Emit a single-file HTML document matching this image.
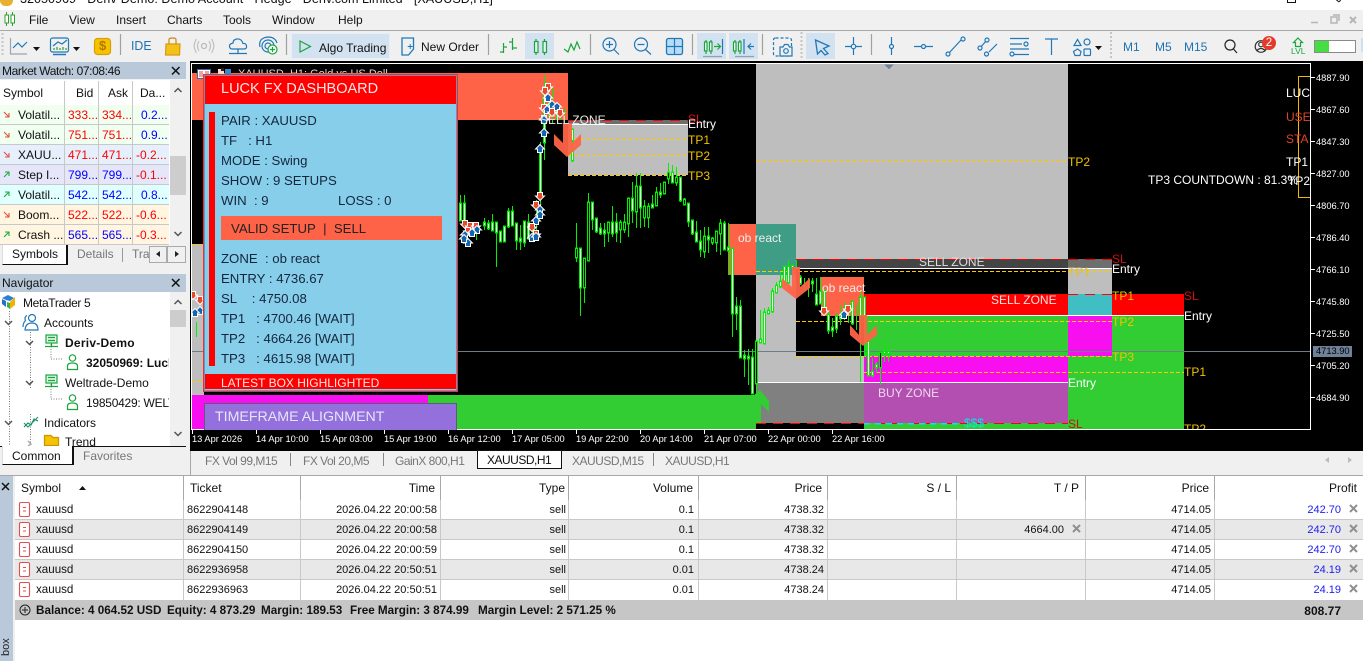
<!DOCTYPE html>
<html><head><meta charset="utf-8"><style>
html,body{margin:0;padding:0;background:#fff}
#p{position:relative;width:1363px;height:661px;overflow:hidden;background:#f0f0f0;font-family:"Liberation Sans",sans-serif;font-size:12px;color:#111}
.b{position:absolute}
.t{position:absolute;white-space:nowrap;line-height:14px;height:14px}
.r{text-align:right}
.lb{color:#f2c200}
.w{color:#fff}
.ax{position:absolute;color:#fff;font-size:9.3px;line-height:11px;white-space:nowrap}
.d{color:#14263c;font-size:13.2px}
.g{color:#777}
.tb{color:#1f72b0}
.n{font-size:11px}
.x{font-size:11.6px}
.k{letter-spacing:-.5px}
.bl{font-weight:bold;font-size:11.7px}
svg{position:absolute;overflow:visible}
</style></head><body><div id="p">

<!-- title bar -->
<div class="b" style="left:0;top:0;width:1363px;height:10px;background:#fff;overflow:hidden">
<div class="t" style="left:20px;top:-8px;font-size:12.6px">32050969 - Deriv-Demo: Demo Account - Hedge - Deriv.com Limited - [XAUUSD,H1]</div>
<div class="b" style="left:0;top:-5px;width:13px;height:11px;border-radius:6px;background:#e8b030"></div>
<div class="b" style="left:1287px;top:-6px;width:7px;height:7px;border:1px solid #111"></div>
<svg style="left:1332px;top:0" width="12" height="4"><path d="M1-3L7 2M11-3L7 2" stroke="#111"/></svg>
</div>

<!-- menu -->
<div class="b" style="left:0;top:30px;width:1363px;height:1px;background:#a8a8a8"></div>
<svg style="left:4px;top:12px" width="14" height="16"><path d="M2.5 0V14M8.5 0V14" stroke="#2ca02c" stroke-width="1"/><rect x="1" y="3" width="3.5" height="8" fill="#fff" stroke="#2ca02c"/><rect x="7" y="3" width="3.5" height="8" fill="#fff" stroke="#2ca02c"/></svg>
<div class="t" style="left:29px;top:13px">File</div>
<div class="t" style="left:69px;top:13px">View</div>
<div class="t" style="left:116px;top:13px">Insert</div>
<div class="t" style="left:167px;top:13px">Charts</div>
<div class="t" style="left:223px;top:13px">Tools</div>
<div class="t" style="left:272px;top:13px">Window</div>
<div class="t" style="left:338px;top:13px">Help</div>
<svg style="left:1300px;top:14px" width="60" height="12" fill="none" stroke="#b5b5b5" stroke-width="1.5"><path d="M11 8.5h7"/><rect x="31" y="3" width="6" height="6"/><path d="M33 1h6v6"/><path d="M50 3l6 6M56 3l-6 6" stroke-width="2"/></svg>

<!-- toolbar -->
<div class="b" style="left:291px;top:33px;width:99px;height:26px;background:#d3e2f0;border:1px solid #e8eef5;box-sizing:border-box"></div>
<div class="b" style="left:525px;top:33px;width:29px;height:26px;background:#d3e2f0"></div>
<div class="b" style="left:697px;top:33px;width:29px;height:26px;background:#d3e2f0"></div>
<div class="b" style="left:729px;top:33px;width:29px;height:26px;background:#d3e2f0"></div>
<div class="b" style="left:806px;top:33px;width:29px;height:26px;background:#d3e2f0"></div>
<svg style="left:0;top:31px" width="1363" height="29" fill="none" stroke="#1f78b8" stroke-width="1.2">
<g stroke="#a0a0a0"><path d="M120.5 3V24M286.5 3V24M488.5 3V24M590.5 3V24M692.5 3V24M762.5 3V24M871.5 3V24"/></g>
<path d="M2.5 2V25M801.5 1V27M1111 1V27" stroke="#c4c4c4" stroke-width="2" stroke-dasharray="2 2"/>
<!-- line chart -->
<path d="M10.5 7V23H27" stroke="#9aa5b0"/><path d="M13 17L18 12L22 16L27 11"/>
<path d="M33 16h7l-3.5 4z" fill="#111" stroke="none"/>
<!-- chart2 -->
<rect x="50.5" y="7" width="18" height="14" rx="2"/><path d="M53 23.5h13" stroke-width="1.5"/><path d="M53 15L58 11L62 13L67 9"/><path d="M54 19v-2M57 19v-3M60 19v-2M63 19v-3M66 19v-2" stroke="#2ca02c"/>
<path d="M73 16h7l-3.5 4z" fill="#111" stroke="none"/>
<!-- dollar -->
<rect x="94.5" y="7.5" width="16" height="16" rx="3" fill="#f7c200" stroke="#d8a000"/>
<!-- bag -->
<path d="M166 13H180L179.5 24H165.5Z" fill="#f2c21a" stroke="#d89a10"/><path d="M169 13V8.5Q169 7 172.500 7T176 8.5V13" stroke="#c88a10"/>
<!-- signal -->
<circle cx="204" cy="15" r="2.5" stroke="#b8b8b8"/><path d="M199 10Q196 15 199 20M209 10Q212 15 209 20M196.5 8Q192 15 196.5 22M211.5 8Q216 15 211.5 22" stroke="#c0c0c0"/>
<!-- cloud -->
<path d="M232 18H244Q247 18 246.5 15Q246 12 243 12.5Q241.5 7.5 237 8Q233 8.5 233 12Q229 13 229.5 15.5Q230 18 232 18Z"/><path d="M238 18V22M229 22.5H247"/>
<!-- radar -->
<circle cx="268" cy="15" r="3"/><circle cx="268" cy="15" r="6"/><path d="M260 16Q258 7 268 6Q275 6 277 12"/>
<circle cx="272.5" cy="18.5" r="4.5" fill="#fff" stroke="#1aa53c"/><path d="M270 18.5h5M272.5 16v5" stroke="#1aa53c"/>
<!-- algo -->
<path d="M300 10L310.5 15.5L300 21Z" stroke="#1aa53c"/>
<!-- new order -->
<path d="M402 7H413.5V18L408.5 24H402Z" stroke-width="1.3"/><path d="M407.7 15.5h5M410.2 13v5" stroke-width="1"/>
<!-- bars -->
<path stroke="#1aa53c" d="M503.5 12V22M500 21H503.5M503.5 16H507M512.5 7V19M509 11H512.5M512.5 17H517"/>
<!-- candles -->
<g stroke="#1aa53c"><path d="M536 8V24M544.5 8V24"/><rect x="534.5" y="10.5" width="3.5" height="11" fill="#e9f2f9"/><rect x="543" y="10.5" width="3.5" height="11" fill="#e9f2f9"/></g>
<!-- line -->
<path d="M564 18L568 21L571 13L574 19L577 11L580 18" stroke="#1aa53c"/>
<!-- zoom -->
<circle cx="609.5" cy="13.5" r="6.5"/><path d="M614 18.5L619 23.5M606 13.5H613M609.5 10V17"/>
<circle cx="641" cy="13.5" r="6.5"/><path d="M645.5 18.5L651 23.5M637.5 13.5H644.5"/>
<rect x="666.5" y="7.5" width="16" height="16" rx="2" fill="#b9dcf6" stroke-width="1.3"/><path d="M666.5 15.5H682.5M674.5 7.5V23.5"/>
<!-- shift -->
<g stroke="#1aa53c"><path d="M706 9V23M711 9V23"/><rect x="704.5" y="11" width="2.5" height="9" fill="#fff"/><rect x="709.5" y="11" width="2.5" height="9" fill="#fff"/><path d="M714 15.5H720M717.5 12.5L720.5 15.5L717.5 18.5"/></g><path d="M722.5 8V23"/><path d="M703 25.5H722" stroke="#8aa0b4"/>
<g stroke="#1aa53c"><path d="M735 9V23M740 9V23"/><rect x="733.5" y="11" width="2.5" height="9" fill="#fff"/><rect x="738.5" y="11" width="2.5" height="9" fill="#fff"/></g><path d="M744 8V23M748 15.5H754M751 12.5L748 15.5L751 18.5"/><path d="M735 25.5H754" stroke="#8aa0b4"/>
<!-- camera -->
<rect x="773.5" y="7" width="18" height="18" rx="2" stroke-dasharray="3 2"/><path d="M780 16H783L784.5 13.5H788L789.5 16H792V25H780Z" fill="#f0f0f0"/><circle cx="786" cy="20" r="2.3"/>
<!-- cursor -->
<path d="M815.5 9L829 15L823.5 17.5L828 22.5L825 24L821 19.5L817.5 23Z" stroke-width="1.3"/>
<!-- cross -->
<path d="M845 15.5H862M853.5 6V24"/><circle cx="853.5" cy="15.5" r="2.2" fill="#f0f0f0"/>
<!-- vertical -->
<path d="M891.5 6V24"/><circle cx="891.5" cy="15.5" r="2" fill="#f0f0f0"/>
<path d="M914 15.5H933"/><circle cx="923.5" cy="15.5" r="2" fill="#f0f0f0"/>
<path d="M949 22L962 8"/><circle cx="948" cy="23" r="2" fill="#f0f0f0"/><circle cx="963" cy="8" r="2" fill="#f0f0f0"/>
<path d="M980 17L986 10M989 21L997 13"/><circle cx="980" cy="17" r="2" fill="#f0f0f0"/><circle cx="987" cy="9" r="2" fill="#f0f0f0"/><circle cx="986.5" cy="23" r="2" fill="#f0f0f0"/>
<path d="M1010 7.5H1029M1010 13H1022M1010 18H1029M1014 23.5H1029"/><circle cx="1026" cy="13" r="2" fill="#f0f0f0"/><circle cx="1012" cy="23" r="2" fill="#f0f0f0"/>
<path d="M1045 8H1058M1051.5 8V24"/>
<path d="M1074 14.5L1077.5 8.5L1081 14.5Z"/><circle cx="1087" cy="11" r="3"/><path d="M1077.5 18L1081 20.5L1080 24.5H1075L1073.5 20.5Z"/><rect x="1084" y="18" width="6.5" height="6.5" rx="1"/>
<path d="M1095 15h7l-3.5 4z" fill="#111" stroke="none"/>
<!-- search -->
<circle cx="1230" cy="14" r="5" stroke="#222"/><path d="M1233.5 18L1237 22" stroke="#222"/>
<!-- user -->
<circle cx="1261" cy="15.5" r="5.8" stroke="#333"/><circle cx="1261" cy="13.5" r="2.3" stroke="#333"/><path d="M1256.5 20Q1261 15 1265.5 20" stroke="#333"/>
<!-- LVL arrow -->
<path d="M1298 7L1302.500 11.500H1300.500V15.500H1295.500V11.500H1293.500Z" stroke="#1aa53c"/>
</svg>
<div class="t" style="left:131px;top:39px;color:#1f72b0;font-size:13px;transform:scaleX(.95);transform-origin:left">IDE</div>
<div class="t" style="left:99px;top:39px;color:#b07a00;font-size:13px;font-weight:bold">$</div>
<div class="t" style="left:319px;top:41px">Algo Trading</div>
<div class="t" style="left:421px;top:40px">New Order</div>
<div class="t tb" style="left:1123px;top:40px">M1</div>
<div class="t tb" style="left:1155px;top:40px">M5</div>
<div class="t tb" style="left:1184px;top:40px">M15</div>
<div class="b" style="left:1262px;top:36px;width:14px;height:14px;border-radius:7px;background:#e33a2c;color:#fff;text-align:center;line-height:14px;font-size:11.5px">2</div>
<div class="t" style="left:1291px;top:47px;color:#1aa53c;font-size:8.5px;height:8px;line-height:8px">LVL</div>
<div class="b" style="left:1314px;top:40px;width:42px;height:13px;background:#fff;border:1px solid #8a8a8a;box-sizing:border-box"><div style="width:14px;height:11px;background:#44dd44"></div></div>
<div class="b" style="left:1361px;top:38px;width:2px;height:14px;background:#cfe0f0"></div>

<!-- CHART -->
<div class="b" style="left:190px;top:60px;width:1173px;height:1px;background:#f0f0f0"></div>
<div class="b" style="left:190px;top:61px;width:1173px;height:390px;background:#000;overflow:hidden"></div>
<svg style="left:0;top:0" width="1363" height="661" shape-rendering="crispEdges">
<defs>
<clipPath id="c"><rect x="192" y="64" width="1118" height="365"/></clipPath>
<path id="u" d="M0-4.5L4.5 0H2.5V3.5H-2.5V0H-4.5Z" fill="#1464b0" stroke="#fff" stroke-width="1"/>
<path id="e" d="M0 4.5L4.5 0H2.5V-3.5H-2.5V0H-4.5Z" fill="#e8492a" stroke="#fff" stroke-width="1"/>
<path id="bw" d="M460.5 204v16M464.5 204v16M484.5 223v2M488.5 224v4M492.5 223v7M496.5 223v9M500.5 232v9M504.5 227v14M508.5 212v14M512.5 212v13M516.5 224v16M520.5 239v2M524.5 222v20M528.5 223v15M540.5 150v43M544.5 93v49M572.5 130v10M572.5 150v10M580.5 249v38M592.5 203v16M596.5 219v12M600.5 229v4M604.5 231v2M612.5 223v10M616.5 223v9M632.5 199v11M640.5 187v20M652.5 205v2M660.5 193v1M672.5 173v9M680.5 178v22M688.5 204v17M692.5 221v12M696.5 233v8M700.5 242v7M708.5 237v2M724.5 224v25M728.5 248v2M732.5 249v64M736.5 307v6M740.5 307v50M744.5 356v2M748.5 357v1M752.5 358v35M760.5 340v2M764.5 313v30M768.5 311v2M772.5 292v19M776.5 286v6M780.5 282v4M784.5 267v15M788.5 267v15M792.5 266v1M800.5 278v5M812.5 282v1M816.5 295v9M820.5 292v11M824.5 291v19M828.5 315v15M832.5 328v2M836.5 317v11M840.5 317v1M852.5 302v21M860.5 298v17M864.5 298v17M868.5 342v33M872.5 372v3M876.5 365v2M884.5 352v1M888.5 352v1"/>
<path id="bh" d="M576.5 249v8M584.5 259v28M588.5 203v57M608.5 223v9M620.5 223v6M624.5 223v6M628.5 199v24M636.5 187v24M644.5 207v10M648.5 207v10M656.5 193v12M664.5 183v10M668.5 173v5M676.5 178v4M684.5 200v4M704.5 237v14M712.5 239v3M716.5 232v10M720.5 224v9M756.5 342v41M880.5 353v14"/>
</defs>
<g clip-path="url(#c)">
<rect x="192" y="73" width="376" height="47" fill="#ff6347"/>
<rect x="756" y="64" width="312" height="195" fill="#bebebe"/>
<rect x="568" y="120" width="120" height="4" fill="#6e6e6e"/>
<rect x="568" y="124" width="120" height="51" fill="#bebebe"/>
<rect x="192" y="244" width="12" height="151" fill="#bebebe"/>
<rect x="192" y="395" width="236" height="34" fill="#f80ff0"/>
<rect x="428" y="395" width="328" height="34" fill="#32cd32"/>
<rect x="728" y="224" width="28" height="51" fill="#ff6347"/>
<rect x="756" y="224" width="40" height="51" fill="#3f9d85"/>
<rect x="756" y="275" width="40" height="107" fill="#bebebe"/>
<rect x="796" y="356" width="68" height="26" fill="#bebebe"/>
<rect x="796" y="259" width="272" height="9" fill="#444"/>
<rect x="756" y="382" width="108" height="41" fill="#808080"/>
<rect x="864" y="294" width="204" height="21" fill="#f00"/>
<rect x="864" y="315" width="204" height="41" fill="#32cd32"/>
<rect x="864" y="356" width="204" height="26" fill="#f80ff0"/>
<rect x="864" y="382" width="204" height="41" fill="#b24fb0"/>
<rect x="864" y="423" width="204" height="6" fill="#32cd32"/>
<rect x="1068" y="259" width="44" height="9" fill="#6e6e6e"/>
<rect x="1068" y="268" width="44" height="26" fill="#bebebe"/>
<rect x="1068" y="294" width="44" height="21" fill="#3fbfc4"/>
<rect x="1068" y="315" width="44" height="41" fill="#f80ff0"/>
<rect x="1068" y="356" width="44" height="73" fill="#32cd32"/>
<rect x="1112" y="294" width="72" height="21" fill="#f00"/>
<rect x="1112" y="315" width="72" height="114" fill="#32cd32"/>
<rect x="821" y="277" width="43" height="39" fill="#ff6347"/>
<!-- lines -->
<g fill="none" stroke-width="1">
<path d="M192 351.5H1310" stroke="#6f7a8a"/>
<path d="M568 124.5H688M796 268.5H1112M864 315.5H1184M756 382.5H1068" stroke="#fff"/>
<g stroke="#f00" stroke-dasharray="10 7"><path d="M568 120.5H688M796 259.5H1112M756 423.5H1068M864 294.5H1112"/></g>
<g stroke="#ffc800" stroke-dasharray="4 2"><path d="M568 139.5H688M568 155.5H688M568 175.5H688M756 161.5H1068M756 271.5H1112M796 321.5H1112M796 356.5H1112M864 372.5H1184M192 244.5H204M192 381.5H204"/></g>
<path d="M864 423.5H962" stroke="#00e8e8" stroke-dasharray="6 5" stroke-width="1.5"/>
</g>
<!-- candles wicks -->
<path fill="none" stroke="#00f000" d="M196.5 322V337M460.5 195V220M464.5 195V220M472.5 223V237M476.5 223V240M484.5 218V230M488.5 220V230M492.5 214V230M496.5 223V267M500.5 232V242M504.5 226V242M508.5 208V228M512.5 206V226M516.5 223V250M520.5 225V250M524.5 222V247M528.5 214V240M532.5 225V240M536.5 200V235M540.5 142V210M544.5 75V160M548.5 83V117M552.5 87V123M556.5 103V120M560.5 110V120M564.5 108V125M572.5 130V162M576.5 223V262M580.5 248V316M584.5 258V303M588.5 193V260M592.5 202V230M596.5 218V233M600.5 223V235M604.5 223V247M608.5 222V242M612.5 206V237M616.5 213V242M620.5 220V243M624.5 214V233M628.5 198V237M632.5 182V223M636.5 173V228M640.5 173V228M644.5 200V227M648.5 203V228M652.5 195V208M656.5 187V206M660.5 183V198M664.5 182V193M668.5 163V184M672.5 165V182M676.5 167V186M680.5 177V202M684.5 198V205M688.5 203V227M692.5 220V235M696.5 221V242M700.5 230V257M704.5 227V258M708.5 227V253M712.5 237V245M716.5 232V252M720.5 219V255M724.5 221V250M728.5 223V275M732.5 248V337M736.5 297V330M740.5 300V357M744.5 350V377M748.5 349V385M752.5 349V393M756.5 341V392M760.5 310V343M764.5 308V344M768.5 307V314M772.5 288V313M776.5 282V293M780.5 272V288M784.5 267V282M788.5 260V285M792.5 265V277M796.5 260V270M800.5 275V285M804.5 278V290M808.5 278V297M812.5 278V292M816.5 278V304M820.5 277V304M824.5 290V313M828.5 312V334M832.5 318V337M836.5 313V333M840.5 305V325M844.5 302V320M848.5 308V323M852.5 302V325M856.5 305V330M860.5 290V382M864.5 297V357M868.5 342V376M872.5 358V377M876.5 362V373M880.5 352V385M884.5 341V362M888.5 350V362"/>
<!-- candle bodies -->
<use href="#bw" fill="none" stroke="#00f000" stroke-width="3" stroke-linecap="square"/>
<use href="#bh" fill="none" stroke="#00f000" stroke-width="3" stroke-linecap="square"/>
<use href="#bw" fill="none" stroke="#fff" stroke-width="1"/>
<use href="#bh" fill="none" stroke="#000" stroke-width="1"/>
<!-- big arrows -->
<g fill="#ff6347" fill-opacity=".95" shape-rendering="auto">
<polygon points="563,123 572,123 572,143 581,134 581,145 567,157 554,145 554,134 563,143"/>
<polygon points="792,267 800,267 800,287 810,278 810,288 796,299 782,288 782,278 792,287"/>
<polygon points="859,315 867,315 867,335 877,325 877,335 863,346 850,335 850,325 859,335"/>
<polygon points="760,390 769,401 769,412 761,404 761,423 754,423 754,395" fill="#32cd32" fill-opacity="1"/>
</g>
<!-- markers -->
<g shape-rendering="auto">
<use href="#e" x="548" y="87"/><use href="#e" x="545" y="91"/><use href="#u" x="548" y="98"/><use href="#e" x="544" y="108"/><use href="#u" x="547" y="110"/><use href="#u" x="552" y="105"/><use href="#u" x="557" y="107"/><use href="#e" x="552" y="112"/><use href="#e" x="560" y="113"/><use href="#e" x="544" y="119"/><use href="#u" x="544" y="120"/><use href="#u" x="544" y="133"/><use href="#u" x="540" y="149"/><use href="#e" x="540" y="196"/><use href="#e" x="536" y="205"/><use href="#u" x="540" y="210"/><use href="#u" x="540" y="215"/><use href="#u" x="536" y="221"/><use href="#e" x="532" y="227"/><use href="#e" x="536" y="234"/><use href="#u" x="532" y="238"/><use href="#u" x="536" y="237"/>
<use href="#e" x="465" y="224"/><use href="#e" x="470" y="226"/><use href="#e" x="476" y="226"/><use href="#e" x="468" y="231"/><use href="#u" x="477" y="230"/><use href="#u" x="472" y="233"/><use href="#u" x="465" y="235"/><use href="#u" x="468" y="243"/><use href="#u" x="464" y="239"/>
<use href="#e" x="193" y="295"/><use href="#e" x="200" y="300"/><use href="#u" x="200" y="311"/><use href="#u" x="195" y="313"/>
<use href="#e" x="824" y="311"/><use href="#e" x="848" y="309"/><use href="#u" x="844" y="315"/>
</g>
</g>
<!-- frame -->
<path d="M191.5 63.5H1310.5V429.5H191.5Z" fill="none" stroke="#fff"/>
<path d="M884 64.5H894L889 69Z" fill="#6f8099"/>
<!-- ticks -->
<path stroke="#fff" fill="none" d="M192.5 430V434M256.5 430V434M320.5 430V434M384.5 430V434M448.5 430V434M512.5 430V434M576.5 430V434M640.5 430V434M704.5 430V434M768.5 430V434M832.5 430V434M1311 77.5H1315M1311 109.5H1315M1311 141.5H1315M1311 173.5H1315M1311 205.5H1315M1311 237.5H1315M1311 269.5H1315M1311 301.5H1315M1311 333.5H1315M1311 365.5H1315M1311 397.5H1315"/>
<path fill="none" stroke="#f2b800" d="M1310 76.5H1298.5V197.5H1310"/>
<rect x="1313" y="346" width="39" height="11" fill="#6f8099"/>
</svg>

<!-- chart text -->
<div class="b" style="left:192px;top:64px;width:1118px;height:365px;overflow:hidden">
<div class="t" style="left:348px;top:49px;color:#e8e8e8">SELL ZONE</div>
<div class="t" style="left:496px;top:48px;color:#e01010">SL</div>
<div class="t w" style="left:496px;top:53px">Entry</div>
<div class="t lb" style="left:496px;top:69px">TP1</div>
<div class="t lb" style="left:496px;top:85px">TP2</div>
<div class="t lb" style="left:496px;top:105px">TP3</div>
<div class="t lb" style="left:876px;top:91px">TP2</div>
<div class="t" style="left:546px;top:167px;color:#eee">ob react</div>
<div class="t" style="left:630px;top:217px;color:#eee">ob react</div>
<div class="t" style="left:727px;top:191px;color:#ddd">SELL ZONE</div>
<div class="t" style="left:799px;top:229px;color:#fde0e0">SELL ZONE</div>
<div class="t" style="left:686px;top:322px;color:#eed8ee">BUY ZONE</div>
<div class="t" style="left:772px;top:352px;color:#00e8e8">$$$</div>
<div class="t" style="left:920px;top:188px;color:#d01010">SL</div>
<div class="t w" style="left:920px;top:198px">Entry</div>
<div class="t" style="left:876px;top:201px;color:#e0c030">TP1</div>
<div class="t lb" style="left:920px;top:225px">TP1</div>
<div class="t lb" style="left:920px;top:251px">TP2</div>
<div class="t lb" style="left:920px;top:286px">TP3</div>
<div class="t" style="left:992px;top:225px;color:#d01010">SL</div>
<div class="t w" style="left:992px;top:245px">Entry</div>
<div class="t lb" style="left:992px;top:301px">TP1</div>
<div class="t lb" style="left:992px;top:358px">TP2</div>
<div class="t w" style="left:876px;top:312px">Entry</div>
<div class="t" style="left:876px;top:353px;color:#d01010">SL</div>
<div class="t w" style="left:1094px;top:22px">LUC</div>
<div class="t" style="left:1094px;top:46px;color:#e04428">USE</div>
<div class="t" style="left:1094px;top:68px;color:#e04428">STA</div>
<div class="t w" style="left:1094px;top:91px">TP1</div>
<div class="t w" style="left:956px;top:109px">TP3 COUNTDOWN : 81.3%</div>
<div class="t w" style="left:1096px;top:110px">TP2</div>
</div>
<div class="b" style="left:238px;top:64px;width:150px;height:9px;overflow:hidden"><div class="t" style="left:0;top:3px;color:#ddd;font-size:11px">XAUUSD, H1:  Gold vs US Dollar</div></div>

<!-- time axis -->
<div class="ax" style="left:192px;top:434px">13 Apr 2026</div>
<div class="ax" style="left:256px;top:434px">14 Apr 10:00</div>
<div class="ax" style="left:320px;top:434px">15 Apr 03:00</div>
<div class="ax" style="left:384px;top:434px">15 Apr 19:00</div>
<div class="ax" style="left:448px;top:434px">16 Apr 12:00</div>
<div class="ax" style="left:512px;top:434px">17 Apr 05:00</div>
<div class="ax" style="left:576px;top:434px">19 Apr 22:00</div>
<div class="ax" style="left:640px;top:434px">20 Apr 14:00</div>
<div class="ax" style="left:704px;top:434px">21 Apr 07:00</div>
<div class="ax" style="left:768px;top:434px">22 Apr 00:00</div>
<div class="ax" style="left:832px;top:434px">22 Apr 16:00</div>
<!-- price axis -->
<div class="ax" style="left:1316px;top:73px">4887.90</div>
<div class="ax" style="left:1316px;top:105px">4867.60</div>
<div class="ax" style="left:1316px;top:137px">4847.30</div>
<div class="ax" style="left:1316px;top:169px">4827.00</div>
<div class="ax" style="left:1316px;top:201px">4806.70</div>
<div class="ax" style="left:1316px;top:233px">4786.40</div>
<div class="ax" style="left:1316px;top:265px">4766.10</div>
<div class="ax" style="left:1316px;top:297px">4745.80</div>
<div class="ax" style="left:1316px;top:329px">4725.50</div>
<div class="ax" style="left:1316px;top:346px;color:#000">4713.90</div>
<div class="ax" style="left:1316px;top:361px">4705.20</div>
<div class="ax" style="left:1316px;top:393px">4684.90</div>

<!-- chart top-left icons -->
<svg style="left:197px;top:69px" width="40" height="12" shape-rendering="crispEdges"><rect x=".5" y=".5" width="13" height="9" fill="#fff" stroke="#3068b0"/><path d="M2 3h4M8 3h4M2 5h4M8 5h4M2 7h4M8 7h4" stroke="#e04040"/><rect x="21" y="0" width="6" height="9" fill="#ffd8c8"/><rect x="28" y="0" width="6" height="9" fill="#3c88d0"/><rect x="24" y="-1" width="3" height="3" fill="#222"/></svg>

<!-- dashboard -->
<div class="b" style="left:203px;top:74px;width:255px;height:318px;background:#87ceeb;border:1px solid #f03030;box-sizing:border-box"></div>
<div class="b" style="left:204px;top:75px;width:253px;height:316px;border:1px solid #6a94c0;box-sizing:border-box"></div>
<div class="b" style="left:205px;top:76px;width:251px;height:28px;background:#f00"></div>
<div class="t" style="left:221px;top:81px;color:#ffe6e6;font-size:14.5px;line-height:16px;height:16px">LUCK FX DASHBOARD</div>
<div class="b" style="left:209px;top:112px;width:6px;height:254px;background:#f00"></div>
<div class="t d" style="left:221px;top:114px">PAIR : XAUUSD</div>
<div class="t d" style="left:221px;top:134px">TF&nbsp;&nbsp;&nbsp;: H1</div>
<div class="t d" style="left:221px;top:154px">MODE : Swing</div>
<div class="t d" style="left:221px;top:174px">SHOW : 9 SETUPS</div>
<div class="t d" style="left:221px;top:194px">WIN&nbsp;&nbsp;: 9</div>
<div class="t d" style="left:338px;top:194px">LOSS : 0</div>
<div class="b" style="left:221px;top:216px;width:221px;height:24px;background:#ff6347"></div>
<div class="t d" style="left:231px;top:222px;color:#222">VALID SETUP&nbsp;&nbsp;|&nbsp;&nbsp;SELL</div>
<div class="t d" style="left:221px;top:252px">ZONE&nbsp;&nbsp;: ob react</div>
<div class="t d" style="left:221px;top:272px">ENTRY : 4736.67</div>
<div class="t d" style="left:221px;top:292px">SL&nbsp;&nbsp;&nbsp;&nbsp;: 4750.08</div>
<div class="t d" style="left:221px;top:312px">TP1&nbsp;&nbsp;&nbsp;: 4700.46 [WAIT]</div>
<div class="t d" style="left:221px;top:332px">TP2&nbsp;&nbsp;&nbsp;: 4664.26 [WAIT]</div>
<div class="t d" style="left:221px;top:352px">TP3&nbsp;&nbsp;&nbsp;: 4615.98 [WAIT]</div>
<div class="b" style="left:205px;top:374px;width:251px;height:15px;background:#f00"></div>
<div class="t" style="left:221px;top:376px;color:#ffe6e6">LATEST BOX HIGHLIGHTED</div>
<div class="b" style="left:204px;top:403px;width:253px;height:27px;background:#9370db;border:1px solid #5c5c78;border-bottom:0;box-sizing:border-box"></div>
<div class="t" style="left:215px;top:409px;color:#e6e6fa;font-size:14.2px;line-height:16px;height:16px">TIMEFRAME ALIGNMENT</div>

<!-- MARKET WATCH -->
<div class="b" style="left:0;top:62px;width:186px;height:17px;background:#b9c9da"></div>
<div class="t" style="left:2px;top:64px;letter-spacing:-.4px">Market Watch: 07:08:46</div>
<svg style="left:171px;top:66px" width="10" height="10"><path d="M1 1L8.5 8.5M8.5 1L1 8.5" stroke="#111" stroke-width="1.5"/></svg>
<div class="b" style="left:0;top:80px;width:186px;height:165px;background:#fff"></div>
<div class="t" style="left:3px;top:86px">Symbol</div>
<div class="t" style="left:76px;top:86px">Bid</div>
<div class="t" style="left:108px;top:86px">Ask</div>
<div class="t" style="left:140px;top:86px">Da...</div>
<div class="b" style="left:0;top:105px;width:169px;height:20px;background:#f0fff0"></div>
<div class="b" style="left:0;top:125px;width:169px;height:20px;background:#f0fff0"></div>
<div class="b" style="left:0;top:145px;width:169px;height:20px;background:#e6f0fc"></div>
<div class="b" style="left:0;top:165px;width:169px;height:20px;background:#e6e6fa"></div>
<div class="b" style="left:0;top:185px;width:169px;height:20px;background:#e0ffff"></div>
<div class="b" style="left:0;top:205px;width:169px;height:20px;background:#fff5e0"></div>
<div class="b" style="left:0;top:225px;width:169px;height:20px;background:#fff5e0"></div>
<svg style="left:0;top:0" width="186" height="250" shape-rendering="crispEdges" fill="none" stroke="#c8c8c8">
<path d="M64.5 81V245M98.5 81V245M132.5 81V245M0 124.5H169M0 144.5H169M0 164.5H169M0 184.5H169M0 204.5H169M0 224.5H169M0 244.5H169"/>
</svg>
<svg style="left:0;top:105px" width="20" height="140" fill="none" stroke-width="1.1">
<g stroke="#e05040"><path d="M4 7L9 12M9 8V12H5M4 27L9 32M9 28V32H5M4 47L9 52M9 48V52H5M4 107L9 112M9 108V112H5"/></g>
<g stroke="#1faa3c"><path d="M4 72L9 67M5 67H9V71M4 92L9 87M5 87H9V91M4 132L9 127M5 127H9V131"/></g>
</svg>
<div class="t" style="left:18px;top:108px">Volatil...</div><div class="t" style="left:68px;top:108px;color:#f00">333...</div><div class="t" style="left:102px;top:108px;color:#f00">334...</div><div class="t" style="left:141px;top:108px;color:#00f">0.2...</div>
<div class="t" style="left:18px;top:128px">Volatil...</div><div class="t" style="left:68px;top:128px;color:#f00">751...</div><div class="t" style="left:102px;top:128px;color:#f00">751...</div><div class="t" style="left:141px;top:128px;color:#00f">0.9...</div>
<div class="t" style="left:18px;top:148px">XAUU...</div><div class="t" style="left:68px;top:148px;color:#f00">471...</div><div class="t" style="left:102px;top:148px;color:#f00">471...</div><div class="t" style="left:136px;top:148px;color:#f00">-0.2...</div>
<div class="t" style="left:18px;top:168px">Step I...</div><div class="t" style="left:68px;top:168px;color:#00f">799...</div><div class="t" style="left:102px;top:168px;color:#00f">799...</div><div class="t" style="left:136px;top:168px;color:#f00">-0.1...</div>
<div class="t" style="left:18px;top:188px">Volatil...</div><div class="t" style="left:68px;top:188px;color:#00f">542...</div><div class="t" style="left:102px;top:188px;color:#00f">542...</div><div class="t" style="left:141px;top:188px;color:#00f">0.8...</div>
<div class="t" style="left:18px;top:208px">Boom...</div><div class="t" style="left:68px;top:208px;color:#f00">522...</div><div class="t" style="left:102px;top:208px;color:#f00">522...</div><div class="t" style="left:136px;top:208px;color:#f00">-0.6...</div>
<div class="t" style="left:18px;top:228px">Crash ...</div><div class="t" style="left:68px;top:228px;color:#00f">565...</div><div class="t" style="left:102px;top:228px;color:#00f">565...</div><div class="t" style="left:136px;top:228px;color:#f00">-0.3...</div>
<div class="b" style="left:170px;top:80px;width:16px;height:165px;background:#f0f0f0"></div>
<div class="b" style="left:170px;top:156px;width:16px;height:39px;background:#cdcdcd"></div>
<svg style="left:170px;top:85px" width="16" height="155" fill="none" stroke="#555" stroke-width="1.5"><path d="M4.5 7L8 3.5L11.5 7M4.5 147L8 150.5L11.5 147"/></svg>
<!-- symbol tabs -->
<div class="b" style="left:2px;top:245px;width:65px;height:20px;background:#fff;border:1px solid #111;border-top:0;border-left:1px solid #ddd;box-sizing:border-box;box-shadow:1px 0 0 #111"></div>
<div class="t" style="left:12px;top:247px">Symbols</div>
<div class="t g" style="left:77px;top:247px">Details</div>
<div class="b" style="left:122px;top:248px;width:1px;height:14px;background:#999"></div>
<div class="t g" style="left:132px;top:247px">Tra</div>
<div class="b" style="left:149px;top:246px;width:18px;height:17px;background:#f0f0f0;border:1px solid #aaa;box-sizing:border-box"></div>
<div class="b" style="left:167px;top:246px;width:19px;height:17px;background:#f0f0f0;border:1px solid #aaa;box-sizing:border-box"></div>
<svg style="left:149px;top:246px" width="38" height="17"><path d="M11 5V11L7 8ZM26 5V11L30 8Z" fill="#222"/></svg>

<!-- NAVIGATOR -->
<div class="b" style="left:0;top:274px;width:186px;height:18px;background:#b9c9da"></div>
<div class="t" style="left:2px;top:276px">Navigator</div>
<svg style="left:171px;top:278px" width="10" height="10"><path d="M1 1L8.5 8.5M8.5 1L1 8.5" stroke="#111" stroke-width="1.5"/></svg>
<div class="b" style="left:0;top:292px;width:186px;height:154px;background:#fff;overflow:hidden"></div>
<svg style="left:0;top:292px" width="170" height="154" fill="none" stroke-width="1.2">
<path d="M9.5 19V153M30.5 40V97M51 52V67H62M51 92V107H62M30.5 122V154" stroke="#777" stroke-dasharray="1 1.5" stroke-width="1"/>
<!-- mt5 logo -->
<path d="M2 6L8 3L14 6L10 9L6 8Z" fill="#2b7fd6" stroke="none"/><path d="M2 7L6 9V15L2 12Z" fill="#2b6fc6" stroke="none"/><path d="M15 5V13L10 17V10Z" fill="#f0b400" stroke="none"/><path d="M7 10L10 11V17L7 15Z" fill="#3bb54a" stroke="none"/>
<g stroke="#555" stroke-width="1.5"><path d="M5 29L8.5 32.5L12 29M26 49L29.5 52.5L33 49M26 89L29.5 92.5L33 89M5 129L8.5 132.5L12 129"/></g>
<path d="M28 149L31 152L28 154" stroke="#aaa" stroke-width="1.5"/>
<!-- accounts -->
<g stroke="#1f78b8"><circle cx="32" cy="26" r="3.5"/><path d="M25 38Q25.5 31 32 31Q38 31 38 38Z"/><path d="M27 23.5Q24 25 25.5 28.5Q23 31 23 35"/></g>
<!-- server -->
<g stroke="#1aa53c"><rect x="46" y="43" width="11" height="8" fill="#dff5e4"/><path d="M48 45.5H55M48 48.5H55M45 54.5H58M51.5 51V54"/><rect x="46" y="83" width="11" height="8" fill="#dff5e4"/><path d="M48 85.5H55M48 88.5H55M45 94.5H58M51.5 91V94"/>
<circle cx="72.5" cy="66" r="3.2"/><path d="M67.5 77.5V74Q67.5 71 72.5 71T77.5 74V77.5Z"/><circle cx="72.5" cy="106" r="3.2"/><path d="M67.5 117.5V114Q67.5 111 72.5 111T77.5 114V117.5Z"/></g>
<path d="M24 135L28 131L31 133L34 127L38 129" stroke="#1f78b8"/><path d="M24 131L28 135L33 130L38 125" stroke="#1aa53c"/>
<path d="M44.5 153.5V143.5H51L53 145.5H58.5V153.5Z" fill="#f7c200" stroke="#c89600"/>
</svg>
<div class="t" style="left:23px;top:296px;letter-spacing:-.35px">MetaTrader 5</div>
<div class="t" style="left:44px;top:316px">Accounts</div>
<div class="t" style="left:65px;top:336px;font-weight:bold;letter-spacing:.25px">Deriv-Demo</div>
<div class="b" style="left:86px;top:356px;width:83px;height:14px;overflow:hidden"><div class="t" style="left:0;top:0;font-weight:bold">32050969: Luck</div></div>
<div class="t" style="left:65px;top:376px">Weltrade-Demo</div>
<div class="b" style="left:86px;top:396px;width:83px;height:14px;overflow:hidden"><div class="t" style="left:0;top:0;letter-spacing:-.25px">19850429: WELT</div></div>
<div class="t" style="left:44px;top:416px">Indicators</div>
<div class="b" style="left:65px;top:435px;width:60px;height:11px;overflow:hidden"><div class="t" style="left:0;top:0">Trend</div></div>
<div class="b" style="left:170px;top:292px;width:16px;height:154px;background:#f0f0f0"></div>
<div class="b" style="left:170px;top:310px;width:16px;height:17px;background:#cdcdcd"></div>
<svg style="left:170px;top:297px" width="16" height="145" fill="none" stroke="#555" stroke-width="1.5"><path d="M4.5 7L8 3.5L11.5 7M4.5 135L8 138.5L11.5 135"/></svg>
<div class="b" style="left:0;top:446px;width:186px;height:1px;background:#111"></div>
<div class="b" style="left:2px;top:446px;width:71px;height:19px;background:#fff;border:1px solid #111;border-left-color:#ddd;border-top:0;box-sizing:border-box;box-shadow:1px 0 0 #111"></div>
<div class="t" style="left:12px;top:449px">Common</div>
<div class="t g" style="left:83px;top:449px">Favorites</div>

<!-- chart tabs -->
<div class="b" style="left:190px;top:451px;width:1px;height:24px;background:#a8a8a8"></div>
<div class="t g k" style="left:205px;top:454px">FX Vol 99,M15</div>
<div class="b" style="left:290px;top:453px;width:1px;height:13px;background:#888"></div>
<div class="t g k" style="left:303px;top:454px">FX Vol 20,M5</div>
<div class="b" style="left:383px;top:453px;width:1px;height:13px;background:#888"></div>
<div class="t g k" style="left:395px;top:454px">GainX 800,H1</div>
<div class="b" style="left:477px;top:450px;width:85px;height:19px;background:#fff;border:1px solid #111;box-sizing:border-box"></div>
<div class="t k" style="left:487px;top:453px">XAUUSD,H1</div>
<div class="t g k" style="left:572px;top:454px">XAUUSD,M15</div>
<div class="b" style="left:653px;top:453px;width:1px;height:13px;background:#888"></div>
<div class="t g k" style="left:665px;top:454px">XAUUSD,H1</div>
<svg style="left:1320px;top:455px" width="36" height="12"><path d="M9 2V8L5 5ZM28 2V8L32 5Z" fill="#bbb"/></svg>
<div class="b" style="left:0;top:475px;width:1363px;height:1px;background:#a8a8a8"></div>

<!-- TOOLBOX -->
<div class="b" style="left:0;top:476px;width:13px;height:185px;background:#b9c9da"></div>
<svg style="left:1px;top:482px" width="10" height="10"><path d="M1 1L8 8M8 1L1 8" stroke="#111" stroke-width="1.5"/></svg>
<div class="t" style="left:-4px;top:639px;transform:rotate(-90deg);width:20px;font-size:11px;color:#222">box</div>
<div class="b" style="left:13px;top:476px;width:2px;height:185px;background:#f0f0f0"></div>
<div class="b" style="left:15px;top:476px;width:1348px;height:185px;background:#fff"></div>
<div class="b" style="left:15px;top:520px;width:1348px;height:20px;background:#e8e8e8"></div>
<div class="b" style="left:15px;top:560px;width:1348px;height:20px;background:#e8e8e8"></div>
<svg style="left:0;top:0" width="1363" height="661" shape-rendering="crispEdges" fill="none">
<path stroke="#c8c8c8" d="M183.5 500V600M300.5 500V600M440.5 500V600M568.5 500V600M698.5 500V600M827.5 500V600M956.5 500V600M1085.5 500V600M1214.5 500V600M15 519.5H1363M15 539.5H1363M15 559.5H1363M15 579.5H1363"/>
<path stroke="#a8a8a8" d="M183.5 476V500M300.5 476V500M440.5 476V500M568.5 476V500M698.5 476V500M827.5 476V500M956.5 476V500M1085.5 476V500M1214.5 476V500"/>
</svg>
<svg style="left:0;top:0" width="200" height="600" fill="none" stroke="#e05050" stroke-width="1.1">
<rect x="19.5" y="502.5" width="10" height="14" rx="1.5" fill="#fff"/><path d="M23 507.5h3M23 511h3"/>
<rect x="19.5" y="522.5" width="10" height="14" rx="1.5" fill="#fff"/><path d="M23 527.5h3M23 531h3"/>
<rect x="19.5" y="542.5" width="10" height="14" rx="1.5" fill="#fff"/><path d="M23 547.5h3M23 551h3"/>
<rect x="19.5" y="562.5" width="10" height="14" rx="1.5" fill="#fff"/><path d="M23 567.5h3M23 571h3"/>
<rect x="19.5" y="582.5" width="10" height="14" rx="1.5" fill="#fff"/><path d="M23 587.5h3M23 591h3"/>
<path d="M79 490H86L82.5 486Z" fill="#111" stroke="none"/>
</svg>
<div class="t" style="left:21px;top:481px">Symbol</div>
<div class="t" style="left:190px;top:481px">Ticket</div>
<div class="t r" style="left:335px;width:100px;top:481px">Time</div>
<div class="t r" style="left:465px;width:100px;top:481px">Type</div>
<div class="t r" style="left:593px;width:100px;top:481px">Volume</div>
<div class="t r" style="left:722px;width:100px;top:481px">Price</div>
<div class="t r" style="left:851px;width:100px;top:481px">S / L</div>
<div class="t r" style="left:979px;width:100px;top:481px">T / P</div>
<div class="t r" style="left:1109px;width:100px;top:481px">Price</div>
<div class="t r" style="left:1257px;width:100px;top:481px">Profit</div>

<div class="t x" style="left:36px;top:503px">xauusd</div><div class="t n" style="left:187px;top:503px">8622904148</div><div class="t n r" style="left:317px;width:120px;top:503px">2026.04.22 20:00:58</div><div class="t n r" style="left:466px;width:100px;top:503px">sell</div><div class="t n r" style="left:594px;width:100px;top:503px">0.1</div><div class="t n r" style="left:724px;width:100px;top:503px">4738.32</div><div class="t n r" style="left:1111px;width:100px;top:503px">4714.05</div><div class="t n r" style="left:1241px;width:100px;top:503px;color:#2020f0">242.70</div>
<div class="t x" style="left:36px;top:523px">xauusd</div><div class="t n" style="left:187px;top:523px">8622904149</div><div class="t n r" style="left:317px;width:120px;top:523px">2026.04.22 20:00:58</div><div class="t n r" style="left:466px;width:100px;top:523px">sell</div><div class="t n r" style="left:594px;width:100px;top:523px">0.1</div><div class="t n r" style="left:724px;width:100px;top:523px">4738.32</div><div class="t n r" style="left:964px;width:100px;top:523px">4664.00</div><div class="t n r" style="left:1111px;width:100px;top:523px">4714.05</div><div class="t n r" style="left:1241px;width:100px;top:523px;color:#2020f0">242.70</div>
<div class="t x" style="left:36px;top:543px">xauusd</div><div class="t n" style="left:187px;top:543px">8622904150</div><div class="t n r" style="left:317px;width:120px;top:543px">2026.04.22 20:00:59</div><div class="t n r" style="left:466px;width:100px;top:543px">sell</div><div class="t n r" style="left:594px;width:100px;top:543px">0.1</div><div class="t n r" style="left:724px;width:100px;top:543px">4738.32</div><div class="t n r" style="left:1111px;width:100px;top:543px">4714.05</div><div class="t n r" style="left:1241px;width:100px;top:543px;color:#2020f0">242.70</div>
<div class="t x" style="left:36px;top:563px">xauusd</div><div class="t n" style="left:187px;top:563px">8622936958</div><div class="t n r" style="left:317px;width:120px;top:563px">2026.04.22 20:50:51</div><div class="t n r" style="left:466px;width:100px;top:563px">sell</div><div class="t n r" style="left:594px;width:100px;top:563px">0.01</div><div class="t n r" style="left:724px;width:100px;top:563px">4738.24</div><div class="t n r" style="left:1111px;width:100px;top:563px">4714.05</div><div class="t n r" style="left:1241px;width:100px;top:563px;color:#2020f0">24.19</div>
<div class="t x" style="left:36px;top:583px">xauusd</div><div class="t n" style="left:187px;top:583px">8622936963</div><div class="t n r" style="left:317px;width:120px;top:583px">2026.04.22 20:50:51</div><div class="t n r" style="left:466px;width:100px;top:583px">sell</div><div class="t n r" style="left:594px;width:100px;top:583px">0.01</div><div class="t n r" style="left:724px;width:100px;top:583px">4738.24</div><div class="t n r" style="left:1111px;width:100px;top:583px">4714.05</div><div class="t n r" style="left:1241px;width:100px;top:583px;color:#2020f0">24.19</div>
<svg style="left:1070px;top:500px" width="290" height="100" stroke="#909090" stroke-width="2" fill="none"><path d="M3 25L10 32M10 25L3 32M280 5L287 12M287 5L280 12M280 25L287 32M287 25L280 32M280 45L287 52M287 45L280 52M280 65L287 72M287 65L280 72M280 85L287 92M287 85L280 92"/></svg>

<div class="b" style="left:15px;top:600px;width:1348px;height:20px;background:#c6c6c6"></div>
<svg style="left:19px;top:604px" width="12" height="12" fill="none" stroke="#222"><circle cx="6" cy="6" r="5"/><path d="M3 6H9M6 3V9"/></svg>
<div class="t bl" style="left:36px;top:604px">Balance: 4 064.52 USD</div>
<div class="t bl" style="left:167px;top:604px">Equity: 4 873.29</div>
<div class="t bl" style="left:261px;top:604px">Margin: 189.53</div>
<div class="t bl" style="left:350px;top:604px">Free Margin: 3 874.99</div>
<div class="t bl" style="left:478px;top:604px">Margin Level: 2 571.25 %</div>
<div class="t r" style="left:1241px;width:100px;top:604px;font-weight:bold">808.77</div>

</div></body></html>
